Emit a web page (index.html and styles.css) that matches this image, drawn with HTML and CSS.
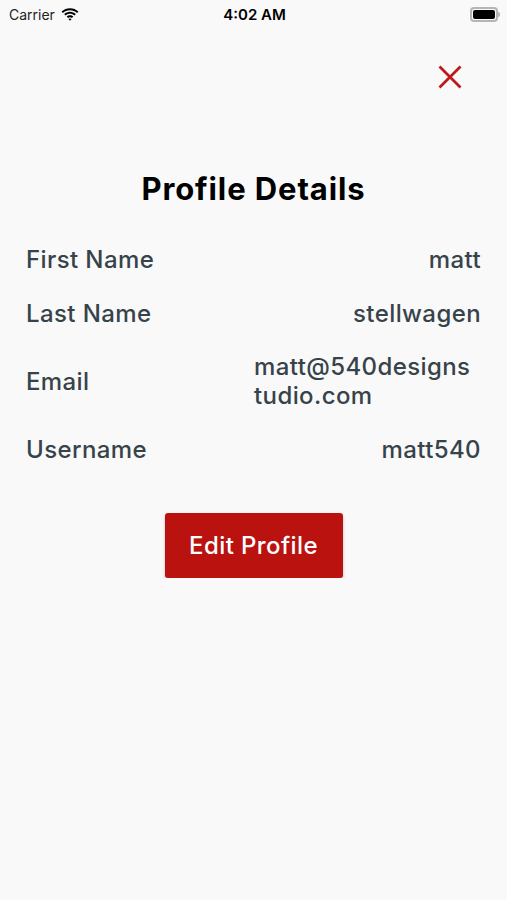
FILE: index.html
```html
<!DOCTYPE html>
<html lang="en">
<head>
  <meta charset="UTF-8">
  <title>Profile Details</title>
  <link rel="stylesheet" href="styles.css">
</head>
<body>

<!-- STATUS BAR -->
<div class="status-bar">
  <div class="status-left">
    <span>Carrier</span>
    <svg class="wifi" width="18" height="13" viewBox="0 0 18 13">
      <path d="M9 2.2c2.7 0 5.2 1 7.1 2.8l1.3-1.4C15.1 1.4 12.2.2 9 .2S2.9 1.4.6 3.6L1.9 5C3.8 3.2 6.3 2.2 9 2.2z" fill="#000"/>
      <path d="M9 5.8c1.7 0 3.3.6 4.5 1.7l1.3-1.4C13.2 4.7 11.2 3.8 9 3.8S4.8 4.7 3.2 6.1l1.3 1.4C5.7 6.4 7.3 5.8 9 5.8z" fill="#000"/>
      <path d="M9 9.3c.8 0 1.4.3 1.9.7l1.4-1.4C11.4 7.8 10.3 7.3 9 7.3s-2.4.5-3.3 1.3l1.4 1.4c.5-.4 1.1-.7 1.9-.7z" fill="#000"/>
      <path d="M9 12.8l1.6-1.7c-.4-.4-1-.6-1.6-.6s-1.200.2-1.6.6z" fill="#000"/>
    </svg>
  </div>
  <div class="status-time">4:02 AM</div>
  <div class="status-right">
    <div class="battery"><div class="battery-fill"></div></div>
    <div class="battery-nub"></div>
  </div>
</div>

<!-- CLOSE -->
<div class="top-row">
  <svg class="close" width="24" height="24" viewBox="0 0 24 24">
    <path d="M1.5 1.5L22.5 22.5M22.5 1.5L1.5 22.5" stroke="#bf1a1a" stroke-width="2.8" fill="none"/>
  </svg>
</div>

<h1 class="title">Profile Details</h1>

<div class="details">
  <div class="row">
    <div class="label">First Name</div>
    <div class="value">matt</div>
  </div>
  <div class="row">
    <div class="label">Last Name</div>
    <div class="value">stellwagen</div>
  </div>
  <div class="row row-tall">
    <div class="label">Email</div>
    <div class="value value-wrap">matt@540designstudio.com</div>
  </div>
  <div class="row">
    <div class="label">Username</div>
    <div class="value">matt540</div>
  </div>
</div>

<div class="actions">
  <button class="edit-btn" type="button">Edit Profile</button>
</div>

</body>
</html>
```

FILE: styles.css
```css
body {
    margin: 0;
    background-color: #f9f9f9;
    font-family: Inter, "Open Sans", "Liberation Sans", sans-serif;
    color: #000;
}

.status-bar {
    height: 28px;
    display: flex;
    align-items: center;
    justify-content: space-between;
    padding: 0 7px 0 9px;
}

.status-left {
    display: flex;
    align-items: center;
    gap: 6px;
    font-size: 14px;
    color: #222;
    width: 120px;
}

.status-time {
    font-size: 15px;
    font-weight: 600;
}

.status-right {
    width: 120px;
    display: flex;
    justify-content: flex-end;
    align-items: center;
}

.battery {
    width: 22px;
    height: 9px;
    border: 2px solid #b5b5b5;
    border-radius: 4px;
    padding: 1px;
    box-sizing: content-box;
}

.battery-fill {
    width: 100%;
    height: 100%;
    background-color: #000;
    border-radius: 2px;
}

.battery-nub {
    width: 2px;
    height: 5px;
    background-color: #b5b5b5;
    border-radius: 0 2px 2px 0;
}

.top-row {
    display: flex;
    justify-content: flex-end;
    padding: 37px 45px 0 0;
}

.title {
    margin: 80px 0 0 0;
    text-align: center;
    font-size: 31px;
    font-weight: 700;
    letter-spacing: 0.9px;
    line-height: 40px;
}

.details {
    padding: 23px 26px 0 26px;
}

.row {
    display: grid;
    grid-template-columns: 1fr 227px;
    align-items: center;
    height: 54px;
    color: #37434a;
    font-size: 24px;
    font-weight: 500;
    letter-spacing: 0.4px;
}

.row-tall {
    height: 82px;
}

.value {
    text-align: right;
}

.value-wrap {
    text-align: left;
    word-break: break-all;
    line-height: 29px;
    padding-right: 8px;
}

.actions {
    display: flex;
    justify-content: center;
    padding-top: 37px;
}

.edit-btn {
    width: 178px;
    height: 65px;
    background-color: #b9120f;
    color: white;
    border: none;
    border-radius: 3px;
    font-family: Inter, "Open Sans", "Liberation Sans", sans-serif;
    font-size: 24px;
    font-weight: 500;
    letter-spacing: 0.4px;
    box-shadow: 0 2px 3px rgba(0, 0, 0, 0.25);
    cursor: pointer;
}
```
